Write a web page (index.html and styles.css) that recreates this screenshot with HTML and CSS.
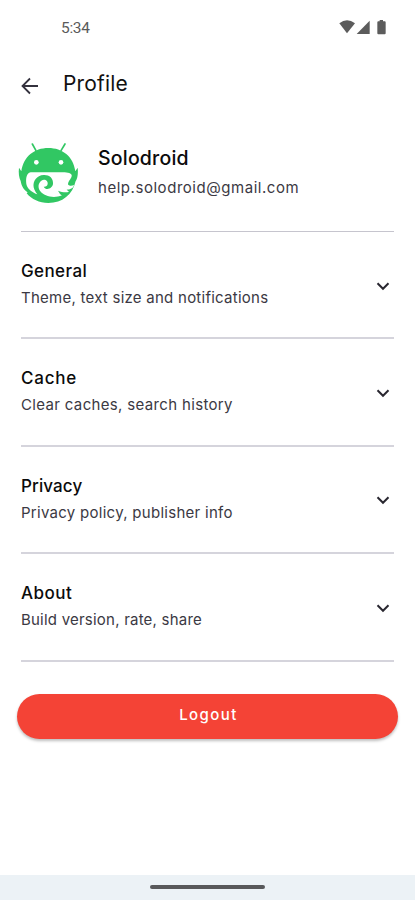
FILE: index.html
```html
<!DOCTYPE html>
<html lang="en">
<head>
<meta charset="utf-8">
<title>Profile</title>
<meta name="viewport" content="width=device-width">
<link rel="stylesheet" href="styles.css">
</head>
<body>
<div class="screen">
  <header class="status">
    <span class="time">5:34</span>
    <svg class="status-icons" viewBox="0 0 240 105" aria-hidden="true">
      <path d="M43 40Q66 22 90 40L66 70Z"/>
      <path d="M134 32V72H95Z"/>
      <path d="M164 30h10v4h5q3 0 3 3v33q0 3-3 3h-19q-3 0-3-3V37q0-3 3-3h4Z"/>
    </svg>
  </header>
  <nav class="appbar">
    <svg class="back" viewBox="0 0 18 18" aria-label="Back"><path d="M17 9H1.8M9 1.5L1.5 9L9 16.5"/></svg>
    <h1>Profile</h1>
  </nav>
  <section class="user">
    <svg class="avatar" viewBox="0 0 240 225" aria-hidden="true">
      <g fill="none" stroke="#31c763" stroke-width="5" stroke-linecap="round"><path d="M67 27L78 47M165 27L153 47"/></g>
      <path fill="#31c763" d="M27 98L34 109C41 64 73 39 115 39S190 64 196 109L203 98C205 117 202 132 197 138C188 179 157 204 115 204C88 204 65 193 50 175L53 172C40 164 34 151 32 138C27 127 25 113 27 98Z"/>
      <path fill="#fff" d="M66 112H158C175 112 184 116 185 120C187 129 174 137 174 148C176 153 185 154 192 150C190 160 180 164 170 164L177 170C167 174 156 171 144 167C148 174 151 179 156 181C132 192 102 184 91 169C83 158 84 144 94 137C104 130 115 138 113 147C112 153 107 156 101 155C108 168 127 161 129 147C131 129 117 119 101 120C80 121 68 138 71 157C73 165 77 172 82 178C68 174 54 163 50 151C47 137 48 123 54 116C57 113 61 112 66 112Z"/>
      <circle fill="#fff" cx="79" cy="82" r="7"/><circle fill="#fff" cx="153" cy="82" r="7"/>
    </svg>
    <div><h2 class="name">Solodroid</h2><p class="email">help.solodroid@gmail.com</p></div>
  </section>
  <main class="list">
    <section class="item"><div><h2 class="t1">General</h2><p class="d1">Theme, text size and notifications</p></div><svg class="chevron" viewBox="0 0 14 9"><path d="M1.5 1.3L7 6.8L12.5 1.3"/></svg></section>
    <section class="item"><div><h2 class="t2">Cache</h2><p class="d2">Clear caches, search history</p></div><svg class="chevron" viewBox="0 0 14 9"><path d="M1.5 1.3L7 6.8L12.5 1.3"/></svg></section>
    <section class="item"><div><h2 class="t3">Privacy</h2><p class="d3">Privacy policy, publisher info</p></div><svg class="chevron" viewBox="0 0 14 9"><path d="M1.5 1.3L7 6.8L12.5 1.3"/></svg></section>
    <section class="item"><div><h2 class="t4">About</h2><p class="d4">Build version, rate, share</p></div><svg class="chevron" viewBox="0 0 14 9"><path d="M1.5 1.3L7 6.8L12.5 1.3"/></svg></section>
  </main>
  <button class="logout">Logout</button>
  <footer class="navbar"><span class="handle"></span></footer>
</div>
</body>
</html>
```

FILE: styles.css
```css
* { box-sizing: border-box; }
body { margin: 0; background: #fff; font-family: Inter, sans-serif; }
h1, h2, p { margin: 0; white-space: nowrap; }
svg { display: block; flex: none; }
.screen { width: 415px; height: 900px; display: flex; flex-direction: column; overflow: hidden; }
.status { height: 56px; padding: 10px 10px 0 61px; display: flex; justify-content: space-between; }
.time { font: 15.5px/37px Roboto, sans-serif; color: #5a5a5a; letter-spacing: -.3px; }
.status-icons { width: 80px; height: 35px; fill: #5c5c5c; }
.appbar { height: 60px; padding-left: 21px; display: flex; align-items: center; }
.back { width: 18px; height: 18px; fill: none; stroke: #34323e; stroke-width: 1.8; }
h1 { margin: -4px 0 0 24px; font-size: 21px; line-height: 30px; font-weight: 400; letter-spacing: .15px; color: #111; }
.user { height: 115px; padding: 19px 0 0 10px; display: flex; gap: 8px; }
.avatar { width: 80px; height: 75px; }
.name { margin-top: 9px; font-size: 19.5px; line-height: 29px; font-weight: 500; letter-spacing: .2px; color: #0b0b0b; }
.email { font-size: 15px; line-height: 30px; letter-spacing: .54px; color: #3b3943; }
.list { margin: 0 21px; border-top: 1px solid #c6c5ce; }
.item { height: 107.4px; padding: 27px 4px 0 0; display: flex; justify-content: space-between; border-bottom: 2px solid #d5d4dc; }
.item h2 { font-size: 17px; line-height: 25px; font-weight: 500; color: #0b0b0b; }
.item p { font-size: 15px; line-height: 28px; color: #3b3943; }
.item .t1 { letter-spacing: .4px; }
.item .t2 { letter-spacing: .8px; }
.item .t3 { letter-spacing: .1px; }
.item .t4 { letter-spacing: .5px; }
.item .d1 { letter-spacing: .25px; }
.item .d2 { letter-spacing: .34px; }
.item .d3 { letter-spacing: .28px; }
.item .d4 { letter-spacing: .22px; }
.chevron { width: 14px; height: 9px; margin-top: 22.5px; fill: none; stroke: #292730; stroke-width: 2; }
.logout { flex: none; width: 381px; height: 45px; margin: 32.4px 0 0 17px; padding: 0 0 2px 2px; border: 0; border-radius: 23px; background: #f44336; color: #fff; font: 500 15px/24px Inter, sans-serif; letter-spacing: 1.45px; box-shadow: 0 2px 3px rgba(0,0,0,.26); }
.navbar { margin-top: auto; height: 25px; padding-top: 10px; display: flex; justify-content: center; background: #ecf2f6; }
.handle { width: 115px; height: 4px; border-radius: 2px; background: #58595b; }
```
